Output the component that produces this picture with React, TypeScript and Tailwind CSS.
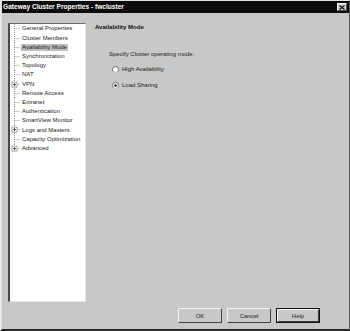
import React from "react";

const items: { label: string; plus?: boolean; selected?: boolean }[] = [
  { label: "General Properties" },
  { label: "Cluster Members" },
  { label: "Availability Mode", selected: true },
  { label: "Synchronization" },
  { label: "Topology" },
  { label: "NAT" },
  { label: "VPN", plus: true },
  { label: "Remote Access" },
  { label: "Extranet" },
  { label: "Authentication" },
  { label: "SmartView Monitor" },
  { label: "Logs and Masters", plus: true },
  { label: "Capacity Optimization" },
  { label: "Advanced", plus: true },
];

function Gutter({ plus, last }: { plus?: boolean; last?: boolean }) {
  return (
    <svg width="11" height="9.2" viewBox="0 0 11 9.2" className="shrink-0">
      <line x1="4.5" y1="0" x2="4.5" y2={last ? 4.6 : 9.2} stroke="#9a9a9a" strokeWidth="1" strokeDasharray="1 1" />
      <line x1="4.5" y1="4.6" x2="10" y2="4.6" stroke="#9a9a9a" strokeWidth="1" strokeDasharray="1 1" />
      {plus && (
        <g>
          <rect x="2" y="2.1" width="5" height="5" fill="#ffffff" stroke="#9a9a9a" strokeWidth="0.9" />
          <line x1="3" y1="4.6" x2="6" y2="4.6" stroke="#333" strokeWidth="0.8" />
          <line x1="4.5" y1="3.1" x2="4.5" y2="6.1" stroke="#333" strokeWidth="0.8" />
        </g>
      )}
    </svg>
  );
}

function Radio({ checked }: { checked?: boolean }) {
  return (
    <svg width="7" height="7" viewBox="0 0 7 7" className="shrink-0">
      <circle cx="3.5" cy="3.5" r="3" fill="#ffffff" stroke="#6a6a6a" strokeWidth="1" />
      <path d="M1.2 5.6 A3 3 0 0 0 5.8 5.6" fill="none" stroke="#e8e8e8" strokeWidth="1" />
      {checked && <circle cx="3.5" cy="3.5" r="1.2" fill="#111" />}
    </svg>
  );
}

function Btn({ label, def }: { label: string; def?: boolean }) {
  return (
    <div
      className={
        "w-[44px] h-[15px] flex items-center justify-center bg-[#c8c8c8] " +
        (def ? "border border-[#111]" : "")
      }
    >
      <div className="w-full h-full flex items-center justify-center border-t border-l border-t-[#f4f4f4] border-l-[#f4f4f4] border-b border-r border-b-[#404040] border-r-[#404040] text-[6px] text-[#1a1a1a] leading-none">
        {label}
      </div>
    </div>
  );
}

export default function App() {
  return (
    <div
      className="w-[350px] h-[331px] bg-[#c8c8c8] flex flex-col border-t border-l-2 border-t-[#e6e6e6] border-l-[#e6e6e6] border-r border-r-[#505050] border-b-2 border-b-[#2a2a2a] overflow-hidden"
      style={{ fontFamily: '"Liberation Sans", Arial, sans-serif' }}
    >
      <div className="h-[12px] bg-[#0c0c0c] flex items-center justify-between pl-[1px] pr-[2px] shrink-0">
        <span className="text-[6.6px] font-bold text-white leading-none">
          Gateway Cluster Properties - fwcluster
        </span>
        <div className="w-[10px] h-[8px] bg-[#d0d0d0] border-t border-l border-t-[#f4f4f4] border-l-[#f4f4f4] border-b border-r border-b-[#505050] border-r-[#505050] flex items-center justify-center">
          <svg width="6" height="5" viewBox="0 0 6 5">
            <path d="M0.5 0.5 L5.5 4.5 M5.5 0.5 L0.5 4.5" stroke="#111" strokeWidth="1.2" />
          </svg>
        </div>
      </div>

      <div className="flex flex-1 min-h-0">
        <div className="pl-[6px] pt-[10px] shrink-0">
          <div className="w-[78px] h-[279px] bg-white border-t border-l-2 border-t-[#6a6a6a] border-l-[#4a4a4a] border-r border-b border-r-[#e4e4e4] border-b-[#e4e4e4] pt-[0.4px]">
            {items.map((it, i) => (
              <div key={it.label} className="h-[9.2px] flex items-center">
                <Gutter plus={it.plus} last={i === items.length - 1} />
                <span
                  className={
                    "text-[6px] leading-[7px] text-[#1c1c1c] whitespace-nowrap px-[1px] " +
                    (it.selected ? "bg-[#bebebe]" : "")
                  }
                >
                  {it.label}
                </span>
              </div>
            ))}
          </div>
        </div>

        <div className="flex flex-col pl-[9px] pt-[11px]">
          <div className="text-[6px] font-bold leading-[7px] text-[#111]">Availability Mode</div>
          <div className="pl-[14px] pt-[20px] text-[6px] leading-[7px] text-[#1c1c1c]">
            Specify Cluster operating mode:
          </div>
          <div className="pl-[17px] pt-[8px] flex items-center gap-[3px]">
            <Radio />
            <span className="text-[6px] leading-[7px] text-[#1c1c1c]">High Availability</span>
          </div>
          <div className="pl-[17px] pt-[9px] flex items-center gap-[3px]">
            <Radio checked />
            <span className="text-[6px] leading-[7px] text-[#1c1c1c]">Load Sharing</span>
          </div>
        </div>
      </div>

      <div className="flex justify-end gap-[5px] pr-[29px] pt-[6px] pb-[6px] shrink-0">
        <Btn label="OK" />
        <Btn label="Cancel" />
        <Btn label="Help" def />
      </div>
    </div>
  );
}
